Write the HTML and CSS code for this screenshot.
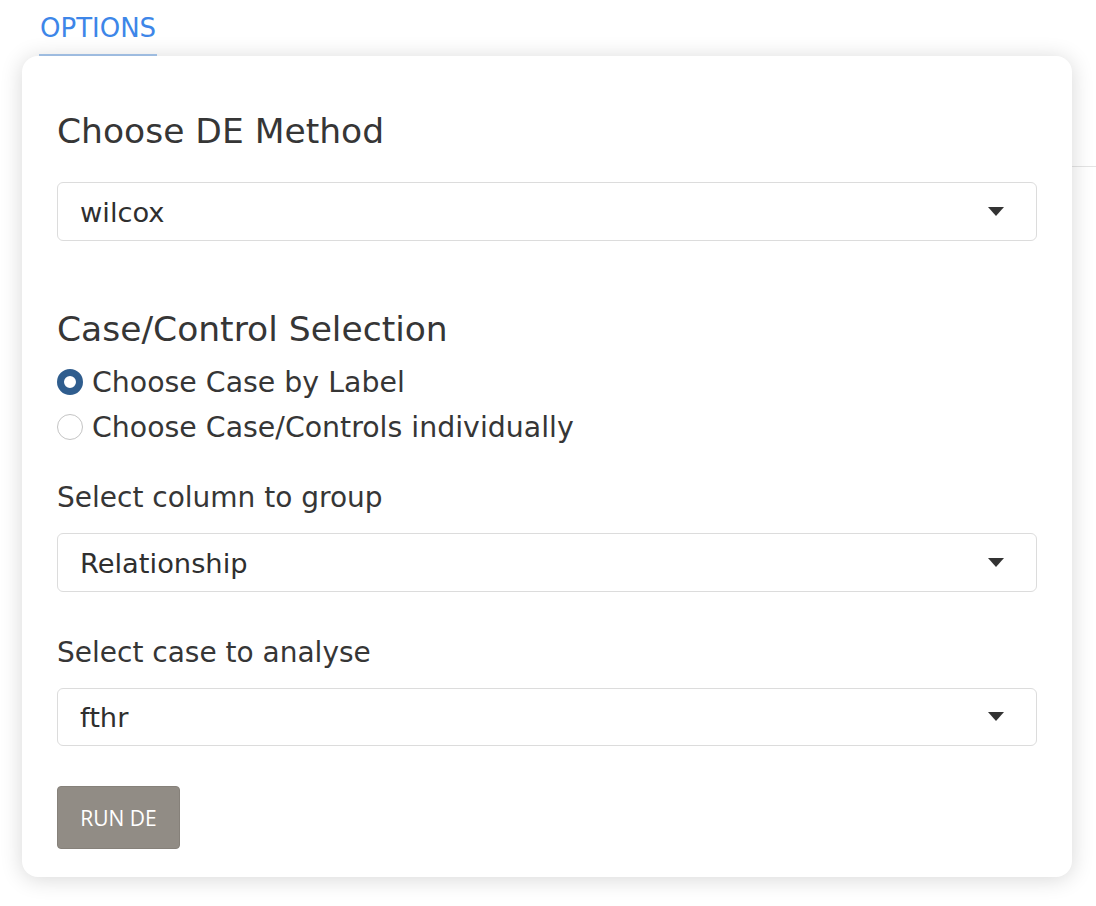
FILE: index.html
```html
<!DOCTYPE html>
<html>
<head>
<meta charset="utf-8">
<link rel="stylesheet" href="styles.css">
</head>
<body>
<div class="page">
  <div class="tabs">
    <div class="tab">OPTIONS</div>
  </div>
  <div class="card">
    <h2 class="title">Choose DE Method</h2>
    <div class="select sel-1"><span>wilcox</span><i class="caret"></i></div>

    <h2 class="title title-2">Case/Control Selection</h2>
    <div class="radios">
      <label class="radio"><span class="dot checked"></span><span class="radio-text">Choose Case by Label</span></label>
      <label class="radio"><span class="dot"></span><span class="radio-text">Choose Case/Controls individually</span></label>
    </div>

    <div class="label label-1">Select column to group</div>
    <div class="select"><span>Relationship</span><i class="caret"></i></div>

    <div class="label label-2">Select case to analyse</div>
    <div class="select"><span>fthr</span><i class="caret"></i></div>

    <button class="btn">RUN DE</button>
  </div>
</div>
</body>
</html>
```
FILE: styles.css
```css
html, body {
  margin: 0;
  padding: 0;
  background: #fff;
}
body {
  font-family: "DejaVu Sans", "Open Sans", sans-serif;
  color: #363636;
}
.page {
  width: 1096px;
  height: 906px;
  overflow: hidden;
  background: linear-gradient(#e4e4e4, #e4e4e4) no-repeat right 0 top 166px / 24px 1px;
}
.tabs {
  padding-left: 39px;
  height: 56px;
}
.tab {
  width: 117px;
  height: 38px;
  padding: 9px 0 7px 1px;
  font-size: 26px;
  line-height: 38px;
  color: #3d86e8;
  border-bottom: 2px solid #a8c8ee;
  white-space: nowrap;
}
.card {
  margin-left: 22px;
  width: 1050px;
  height: 821px;
  box-sizing: border-box;
  padding: 55px 35px 28px;
  background: #fff;
  border-radius: 16px;
  box-shadow: 0 2px 22px rgba(0, 0, 0, 0.16);
  display: flex;
  flex-direction: column;
  align-items: stretch;
}
.title {
  margin: 0;
  font-size: 34.5px;
  font-weight: 400;
  line-height: 40px;
  color: #363636;
  white-space: nowrap;
}
.select {
  margin-top: 31px;
  height: 59px;
  box-sizing: border-box;
  border: 1px solid #dcdcdc;
  border-radius: 6px;
  display: flex;
  align-items: center;
  justify-content: space-between;
  padding: 2px 32px 0 22px;
  font-size: 27.3px;
  color: #2f2f2f;
}
.caret {
  width: 0;
  height: 0;
  margin-top: -2px;
  border-left: 8.5px solid transparent;
  border-right: 8.5px solid transparent;
  border-top: 9px solid #333;
}
.title-2 {
  margin-top: 68px;
}
.radios {
  margin-top: 11px;
  display: flex;
  flex-direction: column;
}
.radio {
  display: flex;
  align-items: center;
  gap: 9px;
  height: 45px;
  font-size: 28.4px;
  white-space: nowrap;
}
.radio-text {
  padding-top: 1px;
}
.dot {
  width: 26px;
  height: 26px;
  box-sizing: border-box;
  border-radius: 50%;
  border: 1px solid #c4c4c4;
  background: #fff;
  flex: none;
}
.dot.checked {
  border: 7px solid #2f5d8e;
}
.label {
  font-size: 28px;
  line-height: 34px;
  padding-top: 2px;
  white-space: nowrap;
}
.label-1 {
  margin-top: 29px;
}
.label-1 + .select {
  margin-top: 18px;
}
.label-2 {
  margin-top: 42px;
}
.label-2 + .select {
  margin-top: 18px;
}
.btn {
  align-self: flex-start;
  margin-top: 40px;
  width: 123px;
  height: 63px;
  border: 1px solid #86817a;
  border-radius: 4px;
  background: #918c85;
  color: #fff;
  font-family: "Open Sans", sans-serif;
  font-size: 21px;
  padding: 0;
}
```
